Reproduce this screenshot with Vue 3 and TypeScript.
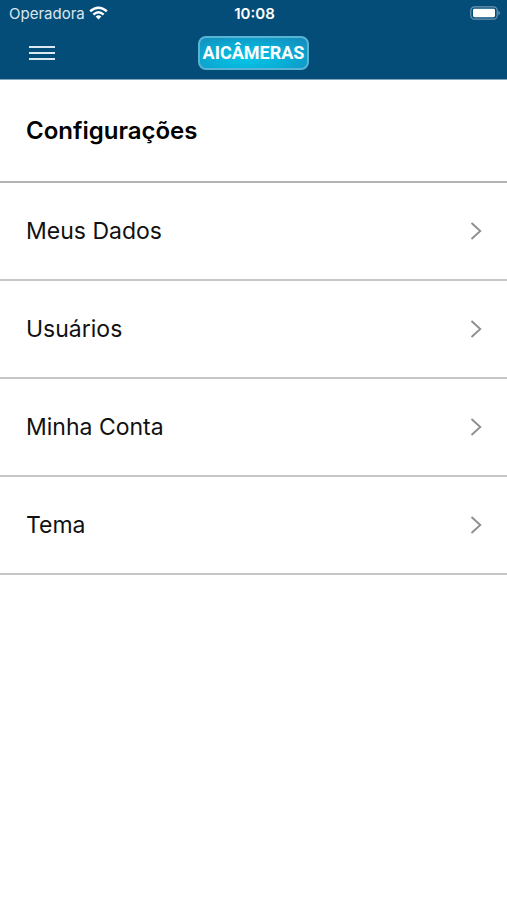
<script setup lang="ts">
interface SettingsItem {
  label: string
  href: string
}

const items: SettingsItem[] = [
  { label: 'Meus Dados', href: '#meus-dados' },
  { label: 'Usuários', href: '#usuarios' },
  { label: 'Minha Conta', href: '#minha-conta' },
  { label: 'Tema', href: '#tema' },
]
</script>

<template>
  <div class="screen">
    <header class="top">
      <div class="status">
        <div class="carrier">
          <span>Operadora</span>
          <svg class="wifi" viewBox="0 0 20 14" aria-hidden="true">
            <g fill="none" stroke="#fff" stroke-width="2.6">
              <path d="M1.2 5.2Q10 -2.2 18.8 5.2" />
              <path d="M4.6 8.7Q10 3.8 15.4 8.7" />
            </g>
            <path d="M7 10.7Q10 8.2 13 10.7L10 13.8Z" fill="#fff" />
          </svg>
        </div>
        <time class="clock">10:08</time>
        <svg class="battery" viewBox="0 0 30 14" aria-hidden="true">
          <rect x="0.8" y="0.8" width="26.4" height="12.4" rx="3.6" fill="none" stroke="#6d96b2" stroke-width="1.2" />
          <rect x="3" y="2.8" width="22" height="8.4" rx="1.4" fill="#fff" />
          <path d="M28.4 4.8Q30 5.6 30 7T28.4 9.2Z" fill="#6d96b2" />
        </svg>
      </div>
      <nav class="bar">
        <button class="menu" type="button">
          <svg viewBox="0 0 26 16" aria-hidden="true">
            <path d="M0 2H26M0 8H26M0 14H26" stroke="#dce8f0" stroke-width="2" />
          </svg>
        </button>
        <div class="logo">AICÂMERAS</div>
      </nav>
    </header>
    <main>
      <h1 class="title">Configurações</h1>
      <ul class="list">
        <li v-for="item in items" :key="item.href">
          <a class="row" :href="item.href">
            <span>{{ item.label }}</span>
            <svg class="chevron" viewBox="0 0 12 18" aria-hidden="true">
              <path d="M1.5 1L10.3 9L1.5 17" fill="none" stroke="#8c8c8c" stroke-width="1.8" />
            </svg>
          </a>
        </li>
      </ul>
    </main>
  </div>
</template>

<style>
body {
  margin: 0;
  background: #fff;
}
</style>

<style scoped>
.screen {
  min-height: 100vh;
  background: #fff;
  color: #000;
  font-family: Inter, 'Liberation Sans', sans-serif;
}

.top {
  background: #044d79;
  color: #fff;
  border-bottom: 1px solid #83a6bc;
}

.status,
.bar {
  display: grid;
  grid-template-columns: 1fr auto 1fr;
  align-items: center;
}

.status {
  height: 26px;
  padding: 0 7px 0 9px;
  font-size: 15px;
}

.carrier {
  display: flex;
  align-items: center;
  gap: 4px;
  color: #dbe7ef;
}

.wifi {
  width: 19px;
  height: 14px;
}

.clock {
  font-weight: 600;
}

.battery {
  justify-self: end;
  width: 30px;
  height: 14px;
}

.bar {
  height: 53px;
  padding: 0 26px;
}

.menu {
  justify-self: start;
  display: flex;
  padding: 8px 3px;
  border: 0;
  background: none;
  cursor: pointer;
}

.menu svg {
  width: 26px;
  height: 16px;
}

.logo {
  display: flex;
  align-items: center;
  justify-content: center;
  box-sizing: border-box;
  width: 111px;
  height: 34px;
  border: 2px solid #58b4d4;
  border-radius: 8px;
  background: radial-gradient(ellipse at 45% 70%, #08c4e6 0%, #0aabd4 50%, #1688b9 100%);
  font-family: Roboto, 'Liberation Sans', sans-serif;
  font-size: 18px;
  font-weight: 700;
}

.title {
  display: flex;
  align-items: center;
  box-sizing: border-box;
  height: 103px;
  margin: 0;
  padding: 0 26px;
  border-bottom: 2px solid #b4b4b4;
  font-size: 24px;
  font-weight: 600;
}

.list {
  margin: 0;
  padding: 0;
  list-style: none;
}

.row {
  display: flex;
  align-items: center;
  justify-content: space-between;
  box-sizing: border-box;
  height: 98px;
  padding: 0 25px 0 26px;
  border-bottom: 2px solid #c6c6c6;
  color: #111;
  font-size: 23px;
  text-decoration: none;
}

.chevron {
  width: 12px;
  height: 18px;
}
</style>
